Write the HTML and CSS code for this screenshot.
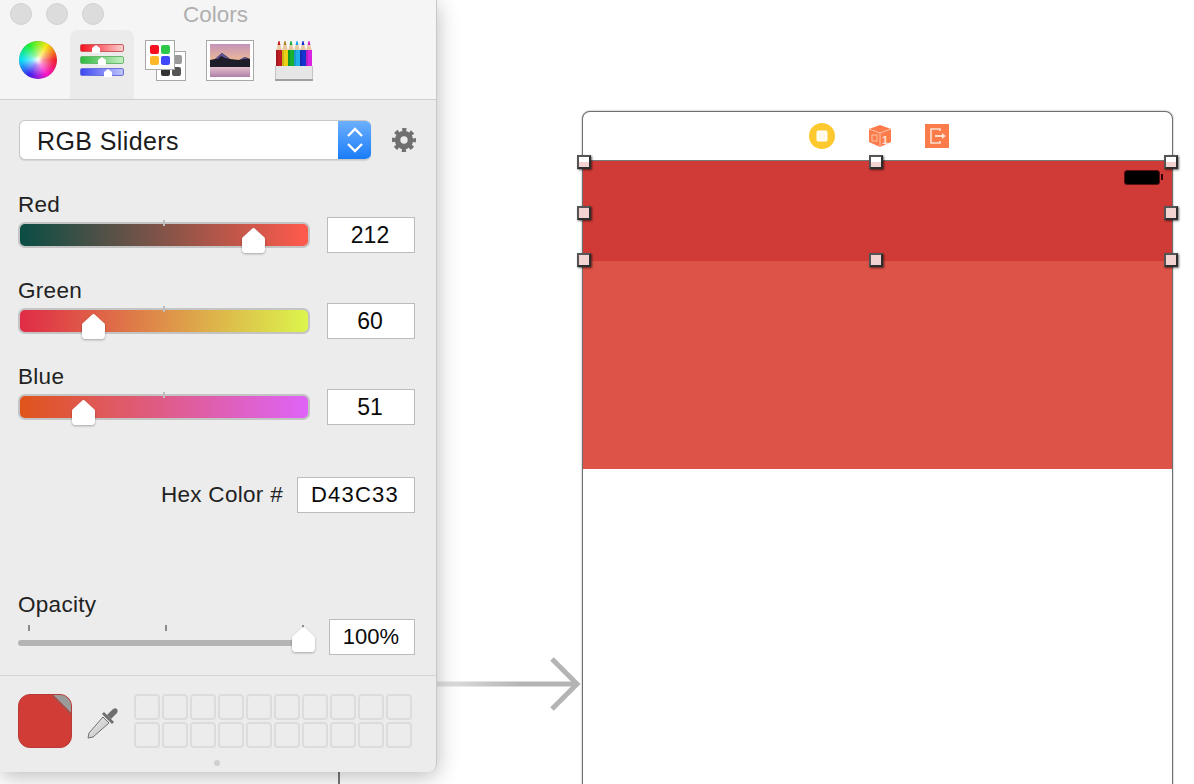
FILE: index.html
```html
<!DOCTYPE html>
<html lang="en">
<head>
    <meta charset="UTF-8">
    <title>Colors</title>
    <link rel="stylesheet" href="styles.css">
</head>
<body>
    <div class="backdrop-line"></div>

    <svg class="segue" width="146" height="60" viewBox="0 0 146 60">
        <defs>
            <linearGradient id="segueLine" x1="0" x2="1" y1="0" y2="0">
                <stop offset="0" stop-color="#e4e4e4"/>
                <stop offset="0.6" stop-color="#b4b4b4"/>
            </linearGradient>
        </defs>
        <rect x="0" y="27.5" width="140" height="5" fill="url(#segueLine)"/>
        <path d="M115 5 L140 30 L115 55" fill="none" stroke="#b4b4b4" stroke-width="5"/>
    </svg>

    <div class="scene">
        <div class="scene-header">
            <svg width="26" height="26" viewBox="0 0 26 26">
                <circle cx="13" cy="13" r="13" fill="#fdc92f"/>
                <rect x="8" y="8" width="10" height="10" rx="1" fill="#fffbe8" stroke="#fff" stroke-width="1"/>
            </svg>
            <svg width="24" height="24" viewBox="0 0 24 24">
                <path d="M12 1 L23 5 V18 L12 23 L1 18 V5 Z" fill="#fb7c4a"/>
                <path d="M1 5 L12 9 L23 5 M12 9 V23" fill="none" stroke="#ffc2a8" stroke-width="1"/>
                <rect x="4" y="11" width="5" height="6" fill="none" stroke="#ffc2a8" stroke-width="1"/>
                <text x="14" y="20" class="cube-num">1</text>
            </svg>
            <svg width="24" height="24" viewBox="0 0 24 24">
                <rect width="24" height="24" fill="#fb7c4a"/>
                <path d="M15 7 V5 H6 V19 H15 V17" fill="none" stroke="#ffe0d2" stroke-width="1.6"/>
                <path d="M10 12 H17" stroke="#ffe0d2" stroke-width="2"/>
                <path d="M17 9 L21 12 L17 15 Z" fill="#ffe0d2"/>
            </svg>
        </div>
        <div class="nav-bar">
            <div class="battery"></div>
            <span class="handle handle-top h-left v-top"></span>
            <span class="handle handle-top h-mid v-top"></span>
            <span class="handle handle-top h-right v-top"></span>
            <span class="handle h-left v-mid"></span>
            <span class="handle h-right v-mid"></span>
            <span class="handle h-left v-bottom"></span>
            <span class="handle h-mid v-bottom"></span>
            <span class="handle h-right v-bottom"></span>
        </div>
        <div class="content-view"></div>
    </div>

    <div class="panel">
        <div class="titlebar">
            <span class="light"></span>
            <span class="light"></span>
            <span class="light"></span>
            <span class="title">Colors</span>
        </div>

        <div class="toolbar">
            <div class="tool tool-wheel"><div class="wheel"></div></div>
            <div class="tool tool-sliders active">
                <svg width="44" height="34" viewBox="0 0 44 34">
                    <defs>
                        <linearGradient id="iconRed"><stop offset="0" stop-color="#f5101c"/><stop offset="1" stop-color="#fbd0d0"/></linearGradient>
                        <linearGradient id="iconGreen"><stop offset="0" stop-color="#2eb840"/><stop offset="1" stop-color="#c8f0c4"/></linearGradient>
                        <linearGradient id="iconBlue"><stop offset="0" stop-color="#3c48f0"/><stop offset="1" stop-color="#c0c4fa"/></linearGradient>
                    </defs>
                    <rect x="0.5" y="0.5" width="43" height="7" rx="1.5" fill="url(#iconRed)" stroke="#cc5a5a"/>
                    <rect x="0.5" y="12.5" width="43" height="7" rx="1.5" fill="url(#iconGreen)" stroke="#66b86c"/>
                    <rect x="0.5" y="24.5" width="43" height="7" rx="1.5" fill="url(#iconBlue)" stroke="#6a70dc"/>
                    <path d="M12 4 L16 1 L20 4 V9 H12 Z" fill="#fff"/>
                    <path d="M18 16 L22 13 L26 16 V21 H18 Z" fill="#fff"/>
                    <path d="M24 28 L28 25 L32 28 V33 H24 Z" fill="#fff"/>
                </svg>
            </div>
            <div class="tool tool-palettes">
                <svg width="42" height="42" viewBox="0 0 42 42">
                    <rect x="11.5" y="11.5" width="29" height="29" fill="#fff" stroke="#a8a8a8"/>
                    <rect x="29" y="15" width="8" height="9" rx="2" fill="#9a9a9a"/>
                    <rect x="16" y="27" width="9" height="9" rx="2" fill="#333"/>
                    <rect x="27" y="27" width="9" height="9" rx="2" fill="#555"/>
                    <rect x="0.5" y="0.5" width="29" height="29" fill="#fff" stroke="#a8a8a8"/>
                    <rect x="5" y="5" width="9" height="9" rx="2" fill="#f8101e"/>
                    <rect x="16" y="5" width="9" height="9" rx="2" fill="#2ec84a"/>
                    <rect x="5" y="16" width="9" height="9" rx="2" fill="#fdb828"/>
                    <rect x="16" y="16" width="9" height="9" rx="2" fill="#4048fa"/>
                </svg>
            </div>
            <div class="tool tool-image">
                <svg width="48" height="41" viewBox="0 0 48 41">
                    <defs>
                        <linearGradient id="sky" x1="0" x2="0" y1="0" y2="1">
                            <stop offset="0" stop-color="#c592b8"/>
                            <stop offset="1" stop-color="#fbc98a"/>
                        </linearGradient>
                        <linearGradient id="water" x1="0" x2="0" y1="0" y2="1">
                            <stop offset="0" stop-color="#e4c0cc"/>
                            <stop offset="1" stop-color="#b080a8"/>
                        </linearGradient>
                    </defs>
                    <rect x="0.5" y="0.5" width="47" height="40" fill="#fff" stroke="#a8a8a8"/>
                    <rect x="4" y="4" width="40" height="23" fill="url(#sky)"/>
                    <rect x="4" y="27" width="40" height="10" fill="url(#water)"/>
                    <path d="M4 20 L9 19 L16 13 L24 19 L33 20 L39 17 L44 19 V27 H4 Z" fill="#1e1c28"/>
                    <path d="M9 19 L16 13 L24 19 L19 18 L15 16 L12 19 Z M33 20 L39 17 L42 19 L38 19 Z" fill="#5c5490"/>
                </svg>
            </div>
            <div class="tool tool-pencils">
                <svg width="38" height="40" viewBox="0 0 38 40">
                    <path d="M1 10 L3 3 H5 L7 10 Z" fill="#e8c8a0"/><path d="M2.6 4 L3.5 0 H4.5 L5.4 4 Z" fill="#c8161e"/><rect x="1" y="9" width="6" height="18" fill="#c01c24"/>
                    <path d="M7 10 L9 3 H11 L13 10 Z" fill="#e8c8a0"/><path d="M8.6 4 L9.5 0 H10.5 L11.4 4 Z" fill="#b08020"/><rect x="7" y="9" width="6" height="18" fill="#ecd018"/>
                    <path d="M13 10 L15 3 H17 L19 10 Z" fill="#e8c8a0"/><path d="M14.6 4 L15.5 0 H16.5 L17.4 4 Z" fill="#18b034"/><rect x="13" y="9" width="6" height="18" fill="#18b02c"/>
                    <path d="M19 10 L21 3 H23 L25 10 Z" fill="#e8c8a0"/><path d="M20.6 4 L21.5 0 H22.5 L23.4 4 Z" fill="#18a8e8"/><rect x="19" y="9" width="6" height="18" fill="#20b0e8"/>
                    <path d="M25 10 L27 3 H29 L31 10 Z" fill="#e8c8a0"/><path d="M26.6 4 L27.5 0 H28.5 L29.4 4 Z" fill="#1428d8"/><rect x="25" y="9" width="6" height="18" fill="#1434d0"/>
                    <path d="M31 10 L33 3 H35 L37 10 Z" fill="#e8c8a0"/><path d="M32.6 4 L33.5 0 H34.5 L35.4 4 Z" fill="#d020d0"/><rect x="31" y="9" width="6" height="18" fill="#d824e0"/>
                    <path d="M2 9 V25 M8 9 V25 M14 9 V25 M20 9 V25 M26 9 V25 M32 9 V25" stroke="#000" stroke-opacity="0.18" stroke-width="1.5"/>
                    <rect x="0" y="25" width="38" height="13" fill="#e6e6e6"/>
                    <rect x="0" y="38" width="38" height="2" fill="#a0a0a0"/>
                    <rect x="0" y="25" width="1" height="13" fill="#c4c4c4"/>
                    <rect x="37" y="25" width="1" height="13" fill="#c4c4c4"/>
                </svg>
            </div>
        </div>

        <div class="panel-body">
            <div class="mode-row">
                <div class="mode-select">
                    <span class="mode-label">RGB Sliders</span>
                    <span class="mode-arrows">
                        <svg width="16" height="26" viewBox="0 0 16 26">
                            <path d="M1 9 L8 2 L15 9 M1 17 L8 24 L15 17" fill="none" stroke="#fff" stroke-width="2.4"/>
                        </svg>
                    </span>
                </div>
                <svg class="gear" width="24" height="24" viewBox="0 0 26 26">
                    <circle cx="13" cy="13" r="7" fill="none" stroke="#707070" stroke-width="6"/>
                    <circle cx="13" cy="13" r="10.8" fill="none" stroke="#707070" stroke-width="4.4" stroke-dasharray="4.4 4.08" stroke-dashoffset="2.2"/>
                </svg>
            </div>

            <div class="channel">
                <label>Red</label>
                <div class="channel-row">
                    <div class="track track-red">
                        <span class="tick"></span>
                        <span class="thumb thumb-red"></span>
                    </div>
                    <div class="value">212</div>
                </div>
            </div>
            <div class="channel">
                <label>Green</label>
                <div class="channel-row">
                    <div class="track track-green">
                        <span class="tick"></span>
                        <span class="thumb thumb-green"></span>
                    </div>
                    <div class="value">60</div>
                </div>
            </div>
            <div class="channel">
                <label>Blue</label>
                <div class="channel-row">
                    <div class="track track-blue">
                        <span class="tick"></span>
                        <span class="thumb thumb-blue"></span>
                    </div>
                    <div class="value">51</div>
                </div>
            </div>

            <div class="hex-row">
                <label>Hex Color #</label>
                <div class="value hex-value">D43C33</div>
            </div>

            <div class="opacity">
                <label>Opacity</label>
                <div class="opacity-row">
                    <div class="opacity-slider">
                        <span class="op-tick op-tick-a"></span>
                        <span class="op-tick op-tick-b"></span>
                        <span class="op-tick op-tick-c"></span>
                        <div class="op-track"></div>
                        <span class="thumb thumb-opacity"></span>
                    </div>
                    <div class="value opacity-value">100%</div>
                </div>
            </div>
        </div>

        <div class="panel-footer">
            <div class="swatch"><span class="swatch-corner"></span></div>
            <svg class="dropper" width="32" height="32" viewBox="0 0 32 32">
                <defs>
                    <linearGradient id="glass" x1="0" x2="1" y1="0" y2="1">
                        <stop offset="0" stop-color="#f4f4f4"/>
                        <stop offset="1" stop-color="#b8b8b8"/>
                    </linearGradient>
                </defs>
                <path d="M16 10 L22 16 L6 30 L1 31 L2 26 Z" fill="url(#glass)" stroke="#707070" stroke-width="1"/>
                <path d="M15 7 L17 5 L27 15 L25 17 Z" fill="#6e6e6e"/>
                <path d="M20 8 L24 4 Q27 0 30 2 Q32 5 28 8 L24 12 Z" fill="#6e6e6e"/>
            </svg>
            <div class="wells">
                <span></span><span></span><span></span><span></span><span></span><span></span><span></span><span></span><span></span><span></span>
                <span></span><span></span><span></span><span></span><span></span><span></span><span></span><span></span><span></span><span></span>
            </div>
            <span class="resize-dot"></span>
        </div>
    </div>
</body>
</html>
```

FILE: styles.css
```css
* {
    margin: 0;
    padding: 0;
    box-sizing: border-box;
    font-family: 'Liberation Sans', Arial, sans-serif;
}

body {
    position: relative;
    width: 1194px;
    height: 784px;
    overflow: hidden;
    background: white;
}

.backdrop-line {
    position: absolute;
    left: 338px;
    top: 760px;
    width: 2px;
    height: 24px;
    background: #777;
}

.segue {
    position: absolute;
    left: 437px;
    top: 654px;
}

/* storyboard scene */
.scene {
    position: absolute;
    left: 582px;
    top: 111px;
    width: 591px;
    height: 700px;
    border: 1px solid #6e6e6e;
    border-radius: 8px 8px 0 0;
    background: white;
    box-shadow: 0 0 1.5px rgba(0,0,0,0.6);
}

.scene-header {
    display: flex;
    justify-content: center;
    align-items: center;
    gap: 33px;
    height: 49px;
    padding-left: 2px;
    border-bottom: 1px solid #777;
}

.cube-num {
    font-size: 11px;
    font-weight: bold;
    fill: #ffe0d2;
}

.nav-bar {
    position: relative;
    height: 100px;
    background: #d13b37;
}

.content-view {
    height: 208px;
    background: #dd5347;
}

.battery {
    position: absolute;
    right: 12px;
    top: 9px;
    width: 36px;
    height: 15px;
    background: black;
    border: 1px solid #5a1010;
    border-radius: 3px;
}

.battery::after {
    content: "";
    position: absolute;
    right: -4px;
    top: 3px;
    width: 2px;
    height: 6px;
    background: #300;
}

.handle {
    position: absolute;
    width: 14px;
    height: 14px;
    margin: -7px 0 0 -7px;
    background: #f3d3d2;
    border: 2px solid #2e2e2e;
    border-top-color: #555;
    border-left-color: #555;
    box-shadow: 1px 1px 2px rgba(0,0,0,0.6);
}

.handle-top {
    background: linear-gradient(white 50%, #f3d3d2 50%);
}

.h-left { left: 1px; }
.h-mid { left: 293px; }
.h-right { left: 588px; }
.v-top { top: 1px; }
.v-mid { top: 52px; }
.v-bottom { top: 99px; }

/* colors panel */
.panel {
    position: absolute;
    left: 0;
    top: 0;
    width: 437px;
    height: 772px;
    display: flex;
    flex-direction: column;
    background: #ececec;
    border-right: 1px solid #c8c8c8;
    border-radius: 0 0 8px 0;
    box-shadow: 0 4px 22px rgba(0,0,0,0.28);
}

.titlebar {
    position: relative;
    display: flex;
    gap: 14px;
    height: 30px;
    padding: 3px 0 0 10px;
    background: #f5f5f5;
}

.light {
    width: 22px;
    height: 22px;
    border-radius: 50%;
    background: #dcdcdc;
    border: 1px solid #d2d2d2;
}

.title {
    position: absolute;
    left: 0;
    right: 5px;
    top: 2px;
    text-align: center;
    font-size: 22.5px;
    line-height: 26px;
    color: #b0b0b0;
}

.toolbar {
    display: flex;
    height: 70px;
    background: #f5f5f5;
    border-bottom: 1px solid #cfcfcf;
}

.tool {
    display: flex;
    justify-content: center;
    flex-shrink: 0;
}

.tool-wheel {
    width: 70px;
    padding: 11px 0 0 6px;
}

.wheel {
    width: 38px;
    height: 38px;
    border-radius: 50%;
    background:
        radial-gradient(circle, white 0%, rgba(255,255,255,0.5) 20%, rgba(255,255,255,0) 60%),
        conic-gradient(from 90deg, #f0202c, #f818c8 60deg, #4020f0 120deg, #08e0f8 180deg, #20f030 240deg, #f8e810 300deg, #f0202c);
    box-shadow: inset 0 0 1px rgba(0,0,0,0.5);
}

.tool-sliders {
    width: 64px;
    height: 69px;
    padding-top: 14px;
}

.tool-sliders.active {
    background: #ebebeb;
    border-radius: 8px 8px 0 0;
}

.tool-palettes {
    margin-left: 11px;
    padding-top: 10px;
}

.tool-image {
    margin-left: 19px;
    padding-top: 10px;
}

.tool-pencils {
    margin-left: 21px;
    padding-top: 11px;
}

.panel-body {
    flex: 1;
    padding: 20px 21px 0 18px;
}

.mode-row {
    display: flex;
    align-items: center;
    margin-bottom: 33px;
}

.mode-select {
    display: flex;
    flex-shrink: 0;
    justify-content: space-between;
    width: 352px;
    height: 40px;
    margin-left: 1px;
    background: white;
    border: 1px solid #c8c8c8;
    border-right: none;
    border-radius: 6px;
    box-shadow: 0 1px 1px rgba(0,0,0,0.1);
    overflow: hidden;
}

.mode-label {
    padding-left: 17px;
    font-size: 25px;
    line-height: 40px;
    letter-spacing: 0.4px;
    color: #1c1c1c;
}

.mode-arrows {
    display: flex;
    align-items: center;
    justify-content: center;
    width: 33px;
    background: linear-gradient(#6cb0fc, #1a7cf8);
}

.gear {
    flex-shrink: 0;
    margin-left: 21px;
}

label {
    display: block;
    font-size: 22.5px;
    line-height: 24px;
    letter-spacing: 0.3px;
    color: #222;
}

.channel {
    margin-bottom: 26px;
}

.channel-row {
    display: flex;
    justify-content: space-between;
    align-items: center;
    height: 36px;
}

.track {
    position: relative;
    width: 292px;
    height: 26px;
    border: 2px solid #c4c4c4;
    border-radius: 7px;
}

.track-red { background: linear-gradient(to right, #0a4d44, #ff5a4c); }
.track-green { background: linear-gradient(to right, #e02b46, #dcf54c); }
.track-blue { background: linear-gradient(to right, #e0541a, #de64f8); }

.tick {
    position: absolute;
    left: 143px;
    top: -4px;
    width: 2px;
    height: 6px;
    background: #bdbdbd;
}

.thumb {
    position: absolute;
    width: 23px;
    height: 25px;
    filter: drop-shadow(0 1px 1px rgba(0,0,0,0.3));
}

.thumb::before {
    content: "";
    display: block;
    width: 100%;
    height: 100%;
    background: white;
    clip-path: polygon(46% 1%, 50% 0, 54% 1%, 98% 38%, 100% 44%, 100% 88%, 97% 95%, 90% 100%, 10% 100%, 3% 95%, 0 88%, 0 44%, 2% 38%);
}

.thumb-red { left: 222px; top: 4px; }
.thumb-green { left: 62px; top: 4px; }
.thumb-blue { left: 52px; top: 4px; }

.value {
    display: flex;
    justify-content: center;
    align-items: center;
    width: 88px;
    height: 36px;
    padding-right: 2px;
    background: white;
    border: 1px solid #bcbcbc;
    font-size: 23px;
    color: #0a0a0a;
}

.hex-row {
    display: flex;
    justify-content: flex-end;
    align-items: center;
    gap: 14px;
    margin-top: 52px;
    height: 36px;
}

.hex-value {
    width: 118px;
    font-size: 22px;
    letter-spacing: 1.2px;
}

.opacity {
    margin-top: 80px;
}

.opacity-row {
    display: flex;
    justify-content: space-between;
    margin-top: 2px;
}

.opacity-slider {
    position: relative;
    width: 297px;
    height: 36px;
}

.op-tick {
    position: absolute;
    top: 6px;
    width: 2px;
    height: 6px;
    background: #8c8c8c;
}

.op-tick-a { left: 10px; }
.op-tick-b { left: 147px; }
.op-tick-c { left: 284px; }

.op-track {
    position: absolute;
    left: 0;
    top: 21px;
    width: 285px;
    height: 6px;
    border-radius: 3px;
    background: #b4b4b4;
}

.thumb-opacity { left: 274px; top: 8px; }

.opacity-value {
    width: 86px;
    font-size: 22px;
}

.panel-footer {
    position: relative;
    display: flex;
    align-items: flex-start;
    height: 97px;
    padding: 18px 0 0 18px;
    border-top: 1px solid #d4d4d4;
}

.swatch {
    position: relative;
    flex-shrink: 0;
    width: 54px;
    height: 54px;
    background: #d13c37;
    border: 1px solid #b83a36;
    border-radius: 12px;
    overflow: hidden;
}

.swatch-corner {
    position: absolute;
    right: 0;
    top: 0;
    width: 20px;
    height: 20px;
    background: linear-gradient(to top right, transparent 48%, #a85048 48% 56%, #9a9a9a 56%);
}

.dropper {
    flex-shrink: 0;
    margin: 13px 0 0 15px;
}

.wells {
    display: grid;
    grid-template-columns: repeat(10, 26px);
    grid-auto-rows: 26px;
    gap: 2px;
    margin-left: 15px;
}

.wells span {
    border: 2px solid #dcdcdc;
    border-radius: 4px;
}

.resize-dot {
    position: absolute;
    left: 214px;
    top: 84px;
    width: 6px;
    height: 6px;
    border-radius: 50%;
    background: #cfcfcf;
}
```
